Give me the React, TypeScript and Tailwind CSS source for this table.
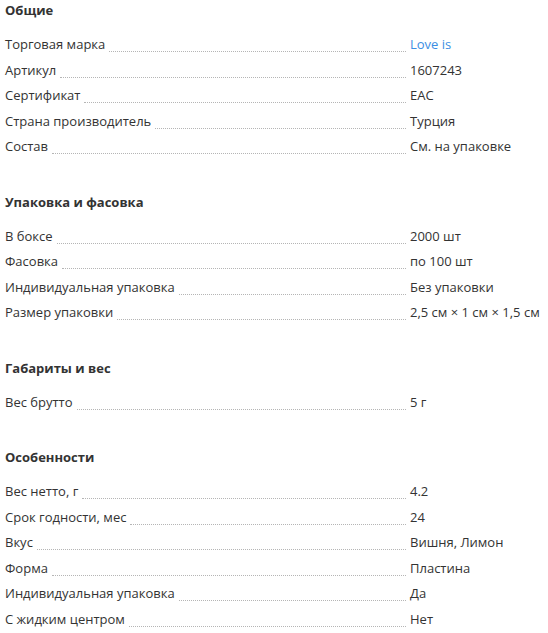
const sections: { title: string; rows: [string, string, boolean?][] }[] = [
  {
    title: 'Общие',
    rows: [
      ['Торговая марка', 'Love is', true],
      ['Артикул', '1607243'],
      ['Сертификат', 'EAC'],
      ['Страна производитель', 'Турция'],
      ['Состав', 'См. на упаковке'],
    ],
  },
  {
    title: 'Упаковка и фасовка',
    rows: [
      ['В боксе', '2000 шт'],
      ['Фасовка', 'по 100 шт'],
      ['Индивидуальная упаковка', 'Без упаковки'],
      ['Размер упаковки', '2,5 см × 1 см × 1,5 см'],
    ],
  },
  {
    title: 'Габариты и вес',
    rows: [['Вес брутто', '5 г']],
  },
  {
    title: 'Особенности',
    rows: [
      ['Вес нетто, г', '4.2'],
      ['Срок годности, мес', '24'],
      ['Вкус', 'Вишня, Лимон'],
      ['Форма', 'Пластина'],
      ['Индивидуальная упаковка', 'Да'],
      ['С жидким центром', 'Нет'],
    ],
  },
]

function App() {
  return (
    <div className="w-[548px] h-[633px] overflow-hidden bg-white pl-[5px] text-[13px] text-[#333] font-['Open_Sans',sans-serif]">
      {sections.map((section) => (
        <section key={section.title} className="mb-[32px]">
          <h3 className="h-[20px] leading-[20px] font-bold">{section.title}</h3>
          <div className="mt-[12px]">
            {section.rows.map(([label, value, link]) => (
              <div key={label} className="flex h-[25.5px] items-center">
                <span className="whitespace-nowrap">{label}</span>
                <span className="mx-[4px] mt-[14px] flex-1 self-center border-b border-dotted border-[#b5b5b5]" />
                <span className={'w-[138px] shrink-0 whitespace-nowrap ' + (link ? 'text-[#3b8ee3]' : '')}>{value}</span>
              </div>
            ))}
          </div>
        </section>
      ))}
    </div>
  )
}

export default App
